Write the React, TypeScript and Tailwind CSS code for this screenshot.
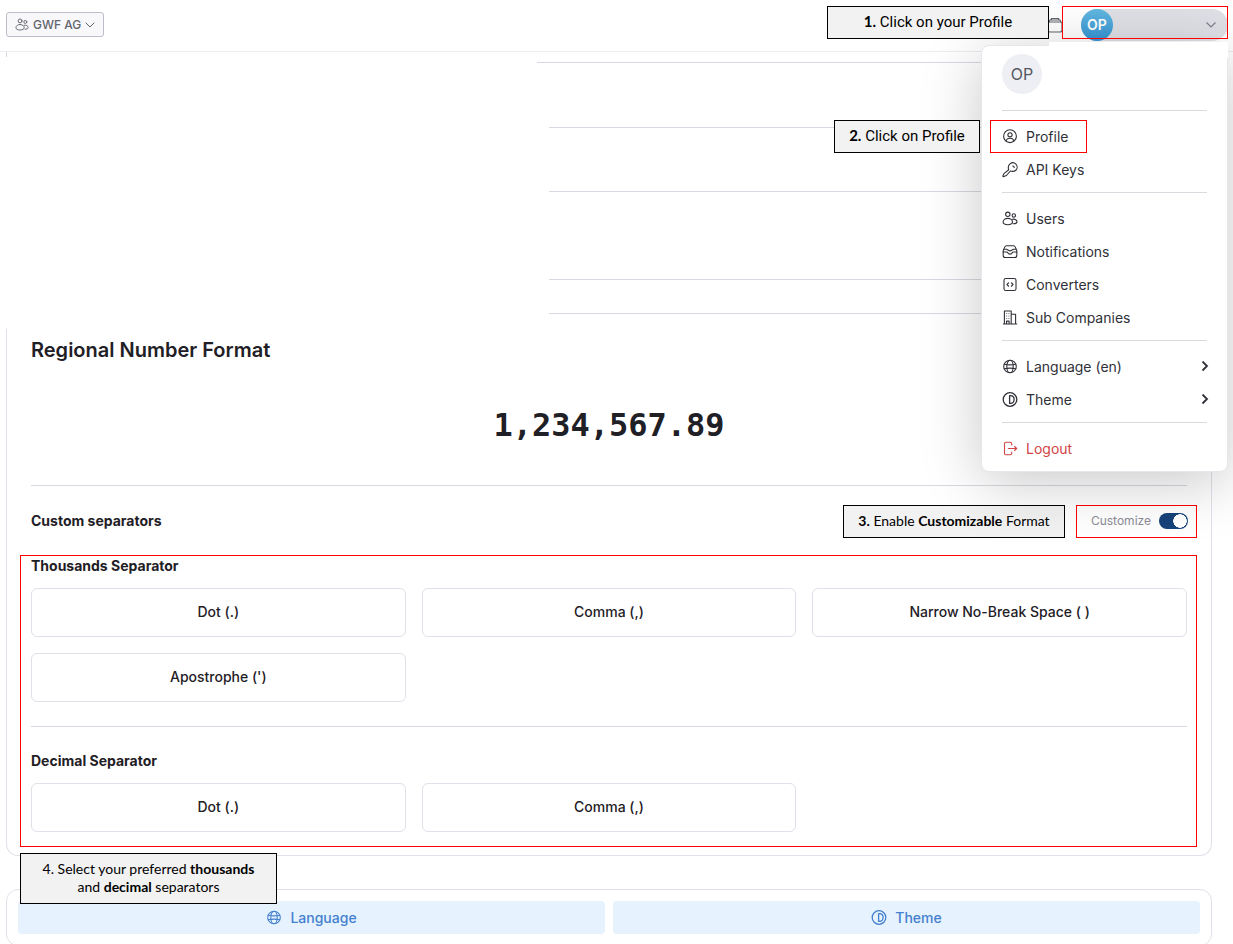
import { useState } from 'react'
import type { ReactNode } from 'react'

const thousands = ['Dot (.)', 'Comma (,)', 'Narrow No-Break Space ( )', "Apostrophe (')"]
const decimals = ['Dot (.)', 'Comma (,)']

function Icon({ children, className = 'size-4' }: { children: ReactNode; className?: string }) {
  return (
    <svg viewBox="0 0 16 16" className={`shrink-0 ${className}`} fill="none" stroke="currentColor"
      strokeWidth="1.1" strokeLinecap="round" strokeLinejoin="round" aria-hidden="true">
      {children}
    </svg>
  )
}

const users = (
  <>
    <circle cx="5.800" cy="3.300" r="2.200" />
    <circle cx="11.800" cy="4.500" r="1.700" />
    <path d="M5.800 7.400c-2.700 0-4.700 1.700-4.700 3.700 0 1.700 1.900 2.600 4.700 2.600s4.700-.9 4.700-2.600c0-2-2-3.700-4.700-3.700z" />
    <path d="M10.400 8.300c2.700-.6 4.600.8 4.600 2.500 0 1.300-1.300 2-3.500 2" />
  </>
)
const globe = (
  <>
    <circle cx="8" cy="7.500" r="6.300" />
    <ellipse cx="8" cy="7.500" rx="3.200" ry="6.300" />
    <path d="M2.200 5.200c3.500.8 8.100.8 11.600 0M2.200 9.800c3.500-.8 8.100-.8 11.600 0" />
  </>
)
const theme = (
  <>
    <circle cx="8" cy="7.500" r="6.800" strokeWidth="1.300" />
    <path d="M7.600 3.600v7.800h.8c2.300 0 3.700-1.500 3.700-3.900s-1.400-3.900-3.700-3.900z" strokeWidth="1.300" />
  </>
)
const profile = (
  <>
    <circle cx="8" cy="7.200" r="6.400" />
    <circle cx="8" cy="5.800" r="2.100" />
    <path d="M4.200 12.100c.3-2 1.700-2.900 3.800-2.900s3.500.9 3.800 2.900" />
  </>
)
const key = (
  <>
    <path d="M6.700 7.800C5.900 5.500 6.400 3.300 8 1.900c1.800-1.500 4.300-1.300 5.900.2 1.600 1.700 1.600 4.300.1 5.900-1.500 1.500-3.500 1.700-5.600 1L4.400 13.500 1.300 14.700l-.5-.5 1.100-2.600z" />
    <path d="M10.700 4c.9 0 1.500.6 1.500 1.500" />
  </>
)
const inbox = (
  <>
    <path d="M1.200 6.700 2.800 2.900c.3-.8.9-1.200 1.700-1.200h7c.8 0 1.400.4 1.700 1.200l1.600 3.800v4.800c0 1.200-.8 2-2 2H3.200c-1.200 0-2-.8-2-2z" />
    <path d="M1.200 8h3.600c.5 0 .8.300 1 .8.300.8 1 1.300 2.200 1.300s1.900-.5 2.200-1.300c.2-.5.500-.8 1-.8h3.600M2 5.200h2.500L8 7l3.500-1.800H14" />
  </>
)
const code = (
  <>
    <rect x="2" y="1.500" width="12" height="12" rx="1.800" />
    <path d="M6.500 5.900 5.100 7.500l1.400 1.600M9.500 5.900l1.400 1.600-1.400 1.600" strokeWidth="1.300" />
  </>
)
const building = (
  <>
    <path d="M1 14h14.200M2.400 14V1h6.800v13M9.200 4.300h4.400V14M4.600 13.800v-2.700h2.500v2.700" strokeLinecap="butt" />
    <path d="M4.700 3.500v.1M6.900 3.500v.1M4.700 6v.1M6.900 6v.1M4.700 8.500v.1M6.900 8.500v.1" strokeWidth="0.800" />
  </>
)
const logout = (
  <path d="M9.700 4V2.700c0-.9-.6-1.500-1.500-1.500H4c-.9 0-1.500.6-1.500 1.500v9.600c0 .9.600 1.500 1.500 1.500h4.200c.9 0 1.500-.6 1.500-1.500V11M6.400 7.500h8.300M12.500 5.500l2.200 2-2.200 2" />
)

const groups = [
  [{ label: 'Profile', icon: profile }, { label: 'API Keys', icon: key }],
  [
    { label: 'Users', icon: users },
    { label: 'Notifications', icon: inbox },
    { label: 'Converters', icon: code },
    { label: 'Sub Companies', icon: building },
  ],
  [{ label: 'Language (en)', icon: globe, sub: true }, { label: 'Theme', icon: theme, sub: true }],
  [{ label: 'Logout', icon: logout, danger: true }],
] as { label: string; icon: ReactNode; sub?: boolean; danger?: boolean }[][]

function Callout({ className = '', children }: { className?: string; children: ReactNode }) {
  return (
    <div className={`border border-black bg-[#f2f2f2] text-center text-black ${className}`}>
      {children}
    </div>
  )
}

function Separators({ title, options }: { title: string; options: string[] }) {
  return (
    <div role="group" aria-label={title}>
      <h3 className="text-sm leading-5 font-bold">{title}</h3>
      <div className="mt-3 grid grid-cols-3 gap-4">
        {options.map(o => (
          <button key={o} type="button"
            className="h-[49px] rounded-md border border-[#dfe0e8] bg-white pb-px text-sm font-medium">
            {o}
          </button>
        ))}
      </div>
    </div>
  )
}

function ProfileMenu() {
  return (
    <nav className="absolute top-[45px] right-[5px] z-10 w-[247px] rounded-lg border border-[#e6e7ec] bg-white px-5 pt-2 pb-1.5 shadow-[0_10px_60px_rgba(0,0,0,0.22)]">
      {/* bridge between the pill and the menu */}
      <div className="absolute -top-1 -right-px left-[67px] h-4 bg-white" />
      <div className="relative mb-4 flex size-10 items-center justify-center rounded-full bg-[#eeeff4] text-base text-[#55575f]">
        OP
      </div>
      {groups.map((items, i) => (
        <ul key={i} className="border-t border-[#d9dae0] pt-[9px] pb-1.5 last:pb-0">
          {items.map(item => (
            <li key={item.label} className="relative">
              {item.label === 'Profile' && (
                <span className="pointer-events-none absolute top-0 -left-3 h-[33px] w-[97px] border border-[#ff0000]" />
              )}
              <button type="button"
                className={`flex h-[33px] w-full items-center gap-2 text-left text-sm ${item.danger ? 'text-[#d04545]' : 'text-[#303138]'}`}>
                <Icon>{item.icon}</Icon>
                <span className="flex-1">{item.label}</span>
                {item.sub && (
                  <svg viewBox="0 0 8 12" className="-mr-0.5 h-3 w-2" fill="none" stroke="currentColor" strokeWidth="1.800" aria-hidden="true">
                    <path d="M1.500 .5 6 5l-4.500 4.500" />
                  </svg>
                )}
              </button>
            </li>
          ))}
        </ul>
      ))}
    </nav>
  )
}

export default function App() {
  const [custom, setCustom] = useState(true)

  return (
    <div className="relative h-screen overflow-hidden bg-white font-['Inter',sans-serif] text-[#1f2026]">
      <header className="flex h-[52px] items-center justify-between border-b border-[#ececf0] pr-[5px] pb-0.5 pl-1.5">
        <button type="button"
          className="flex h-[25px] items-center gap-1 rounded-[3px] border border-[#bdbec9] bg-[#f8f8fb] px-2 text-xs font-medium text-[#62646c]">
          <Icon className="size-3.5">{users}</Icon>
          GWF AG
          <svg viewBox="0 0 10 6" className="h-1.5 w-2.5" fill="none" stroke="currentColor" aria-hidden="true">
            <path d="M.7.7 5 5 9.300.7" />
          </svg>
        </button>
        <div className="flex items-center">
          <svg viewBox="0 0 16 16" className="mr-[18px] size-4" fill="none" stroke="#62646c" strokeWidth="1.200" aria-hidden="true">
            <rect x="1" y="5" width="14" height="10" rx="2" />
            <path d="M2 5 3 3h10l1 2M4 3l.5-1.500h7L12 3" />
          </svg>
          <button type="button" aria-label="Profile menu"
            className="flex h-8 w-[147px] items-center justify-between rounded-full bg-[#dfe0e6] pr-3">
            <span className="flex size-8 items-center justify-center rounded-full bg-linear-to-b from-[#62b8df] to-[#3493d4] text-sm font-semibold text-white">
              OP
            </span>
            <svg viewBox="0 0 10 6" className="h-1.5 w-2.5" fill="none" stroke="#7b7c85" strokeWidth="1.100" aria-hidden="true">
              <path d="M.5.5 5 5 9.500.5" />
            </svg>
          </button>
        </div>
      </header>

      <main className="pr-[21px] pl-1.5">
        <div className="flex h-[277px]">
          <div className="h-[5px] border-l border-[#d8d9e0]" />
          <div className="mr-6 ml-auto w-[54%] text-[#d8d9e0]">
            <div className="mt-2.5 border-t" />
            <div className="ml-3 pt-16">
              <div className="border-t" />
              <div className="mt-[63px] border-t" />
              <div className="mt-[87px] border-t" />
              <div className="mt-[33px] border-t" />
            </div>
          </div>
        </div>

        <section className="rounded-b-xl border-x border-b border-[#e1e2e9] px-6 pb-2">
          <h2 className="pt-1.5 text-xl leading-[30px] font-semibold">Regional Number Format</h2>
          <p className="mt-9 text-center font-['DejaVu_Sans_Mono',monospace] text-[32px] leading-12 font-bold">
            1,234,567.89
          </p>
          <div className="mt-9 border-t border-[#d8d9e0]" />

          <div className="mt-[19px] flex h-[33px] items-center justify-between">
            <h3 className="pb-0.5 text-sm font-bold">Custom separators</h3>
            <div className="-mr-2.5 flex gap-[11px]">
              <Callout className="h-[33px] w-[222px] font-['Lato',sans-serif] text-sm leading-[29px]">
                <b>3.</b> Enable <b>Customizable</b> Format
              </Callout>
              <label className="flex h-[33px] w-[121px] items-center justify-end gap-2 border border-[#ff0000] pr-2 pb-0.5 text-xs text-[#8b8c95]">
                Customize
                <input type="checkbox" role="switch" checked={custom} onChange={e => setCustom(e.target.checked)}
                  className="h-4 w-[29px] appearance-none rounded-full bg-[#9a9ca5] bg-[radial-gradient(circle_at_8px_8px,white_6.5px,transparent_7px)] checked:bg-[#16437a] checked:bg-[radial-gradient(circle_at_21px_8px,white_6.5px,transparent_7px)]" />
              </label>
            </div>
          </div>

          <div className="relative -mr-2.5 -ml-[11px] mt-[17px] border border-[#ff0000] pr-[9px] pb-[14px] pl-2.5">
            <Separators title="Thousands Separator" options={thousands} />
            <div className="mt-6 mb-6 border-t border-[#d8d9e0]" />
            <Separators title="Decimal Separator" options={decimals} />
            <Callout className="absolute top-full -left-px mt-[7px] h-[51px] w-[257px] pt-1.5 font-['Lato',sans-serif] text-sm leading-[18px]">
              4. Select your preferred <b>thousands</b><br />and <b>decimal</b> separators
            </Callout>
          </div>
        </section>

        <section className="mt-[33px] grid grid-cols-2 gap-2 rounded-xl border border-[#e1e2e9] p-[11px] text-sm font-medium text-[#4380ce]">
          <button type="button" className="flex h-[33px] items-center justify-center gap-2 rounded bg-[#e6f2fe]">
            <Icon>{globe}</Icon>
            Language
          </button>
          <button type="button" className="flex h-[33px] items-center justify-center gap-2 rounded bg-[#e6f2fe]">
            <Icon>{theme}</Icon>
            Theme
          </button>
        </section>
      </main>

      <ProfileMenu />

      <Callout className="absolute top-1.5 right-[184px] z-20 h-[33px] w-[222px] font-['Roboto',sans-serif] text-[15px] leading-[29px]">
        <b className="font-['Lato',sans-serif]">1.</b> Click on your Profile
      </Callout>
      <div className="pointer-events-none absolute top-1.5 right-[5px] z-20 h-[33px] w-[166px] border border-[#ff0000]" />
      <Callout className="absolute top-[120px] right-[253px] z-20 h-[33px] w-[146px] font-['Roboto',sans-serif] text-[15px] leading-[29px]">
        <b className="font-['Lato',sans-serif]">2.</b> Click on Profile
      </Callout>
    </div>
  )
}
